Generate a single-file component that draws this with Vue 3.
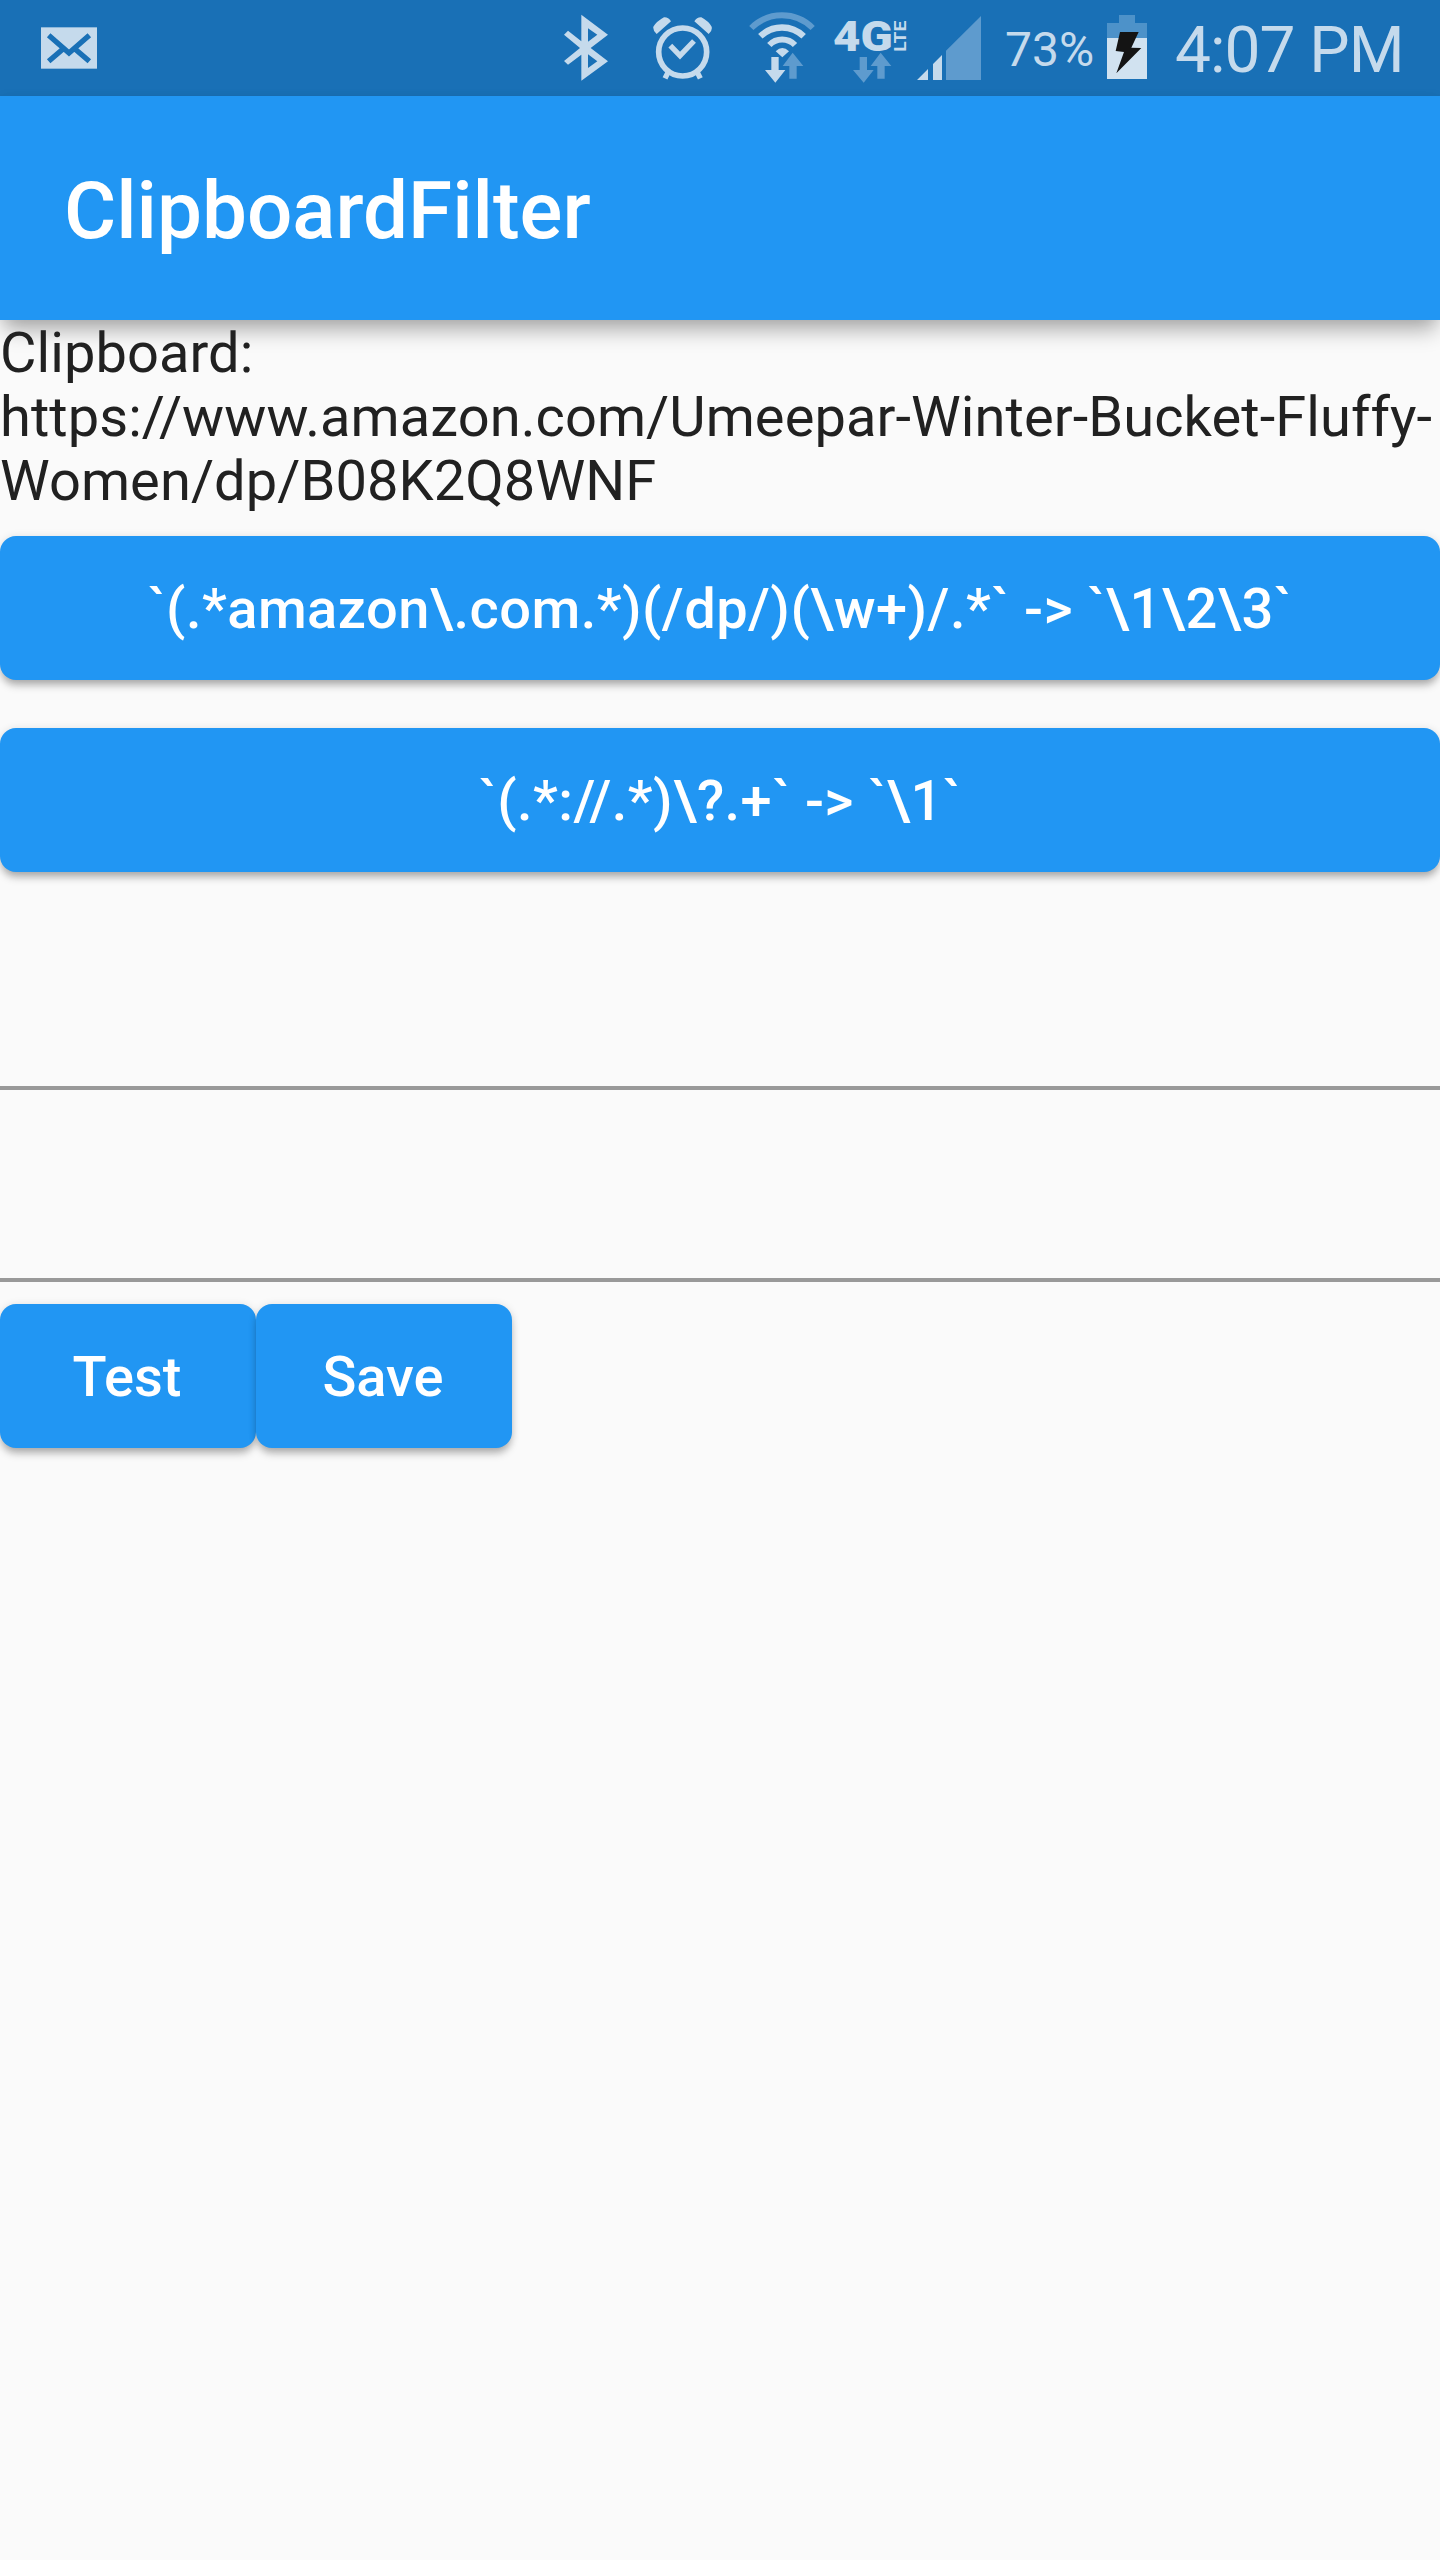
<script setup>
const clipboard = 'https://www.amazon.com/Umeepar-Winter-Bucket-Fluffy-Women/dp/B08K2Q8WNF'
const filters = [
  '`(.*amazon\\.com.*)(/dp/)(\\w+)/.*` -> `\\1\\2\\3`',
  '`(.*://.*)\\?.+` -> `\\1`',
]
</script>

<template>
  <div class="screen">
    <div class="status-bar">
      <svg class="mail" viewBox="123 0 168 288" width="56" height="96">
        <rect class="lit" x="123" y="82" width="168" height="124" />
        <path class="cut" d="M146 106L207 159L268 106M146 184L189 147M268 184L225 147" />
      </svg>

      <svg class="bluetooth" viewBox="72 0 132 288" width="44" height="96">
        <path class="lit" fill-rule="evenodd" d="M84 92L124 124V44L204 104L152 144L204 184L124 242V164L84 194L72 183L120 144L72 104ZM144 85V125L172 104ZM144 163V204L172 184Z" />
      </svg>

      <svg class="alarm" viewBox="339 0 177 288" width="59" height="96">
        <circle class="line" cx="428" cy="156" r="72" stroke-width="17" />
        <path class="line" stroke-width="16" d="M391 137L420 167L462 123M384 217L375 235M472 217L481 235" />
        <path class="lit" d="M350 102L393 64Q385 51 372 52Q350 64 340 80Q338 92 350 102ZM506 102L463 64Q471 51 484 52Q506 64 515 80Q518 92 506 102Z" />
      </svg>

      <svg class="wifi" viewBox="57 0 198 288" width="66" height="96">
        <path class="line faint" stroke-width="18" d="M64 84A130 130 0 0 1 248 84" />
        <path class="line" stroke-width="19" d="M91 109A93 93 0 0 1 221 109" />
        <path class="line" stroke-width="18" d="M118 135A53 53 0 0 1 195 135" />
        <path class="lit" d="M137 154Q157 134 177 154L157 172Z" />
        <path class="dim" d="M188 158L220 198H200V236H178V198H158Z" />
        <path class="lit" d="M124 171H146V210H166L136 248L105 210H124Z" />
      </svg>

      <svg class="network" viewBox="312 0 216 288" width="72" height="96">
        <text class="gen" x="309" y="152" textLength="179" lengthAdjust="spacingAndGlyphs">4G</text>
        <text class="lte" transform="translate(527 155) rotate(-90)" textLength="93" lengthAdjust="spacingAndGlyphs">LTE</text>
        <path class="dim" d="M452 158L484 198H464V236H442V198H422ZM389 171H411V210H431L401 248L369 210H389Z" />
      </svg>

      <svg class="signal" viewBox="558 0 195 288" width="65" height="96">
        <path class="lit" d="M561 240L594 207V240ZM609 240V192L636 165V240Z" />
        <path class="dim" d="M648 240V152L753 48V240Z" />
      </svg>

      <span class="percent">73%</span>

      <svg class="battery" viewBox="351 0 120 288" width="40" height="96">
        <path fill="#4d92c9" d="M387 45H435V69H471V114H351V69H387Z" />
        <rect fill="#d1e2f0" x="351" y="114" width="120" height="123" />
        <path fill="#141414" d="M390 96H446L424 143L454 144L379 220L402 156L377 153Z" />
      </svg>

      <span class="clock">4:07 PM</span>
    </div>

    <header class="app-bar">
      <h1>ClipboardFilter</h1>
    </header>

    <main>
      <p class="clip">Clipboard:<br />{{ clipboard }}</p>
      <button v-for="f in filters" :key="f" class="btn wide">{{ f }}</button>
      <input class="field" aria-label="Pattern" />
      <input class="field" aria-label="Replacement" />
      <div class="actions">
        <button class="btn">Test</button>
        <button class="btn">Save</button>
      </div>
    </main>
  </div>
</template>

<style>
body {
  margin: 0;
  background: #fafafa;
}
</style>

<style scoped>
.screen {
  width: 1440px;
  height: 2560px;
  overflow: hidden;
  background: #fafafa;
  font-family: Roboto, sans-serif;
  color: #212121;
}

.status-bar {
  display: flex;
  height: 96px;
  background: #1970b6;
  color: #c5daec;
}
.status-bar svg {
  flex: none;
}
.lit {
  fill: #c5daec;
}
.dim {
  fill: #5e9bce;
}
.line {
  fill: none;
  stroke: #c5daec;
}
.line.faint {
  stroke: #5e9bce;
}
.cut {
  fill: none;
  stroke: #1970b6;
  stroke-width: 16;
}
.mail {
  margin-left: 41px;
}
.bluetooth {
  margin-left: 467px;
}
.alarm {
  margin-left: 45px;
}
.wifi {
  margin-left: 37px;
}
.network {
  margin-left: 19px;
  overflow: visible;
}
.signal {
  margin-left: 10px;
}
.gen {
  font: 900 125px Roboto, sans-serif;
  fill: #c5daec;
}
.lte {
  font: 700 50px Roboto, sans-serif;
  fill: #c5daec;
}
.percent {
  width: 89px;
  margin-left: 24px;
  font-size: 48px;
  line-height: 100px;
  white-space: nowrap;
}
.battery {
  margin-left: 13px;
}
.clock {
  margin-left: 28px;
  font-size: 64px;
  font-weight: 370;
  line-height: 102px;
  letter-spacing: -1px;
  white-space: nowrap;
}

.app-bar {
  display: flex;
  align-items: center;
  box-sizing: border-box;
  height: 224px;
  padding: 6px 0 0 64px;
  background: #2196f3;
  box-shadow: 0 14px 20px -4px rgba(0, 0, 0, 0.31), 0 2px 12px rgba(0, 0, 0, 0.06);
}
h1 {
  margin: 0;
  color: #fff;
  font-size: 80px;
  font-weight: 500;
  line-height: 94px;
}

main {
  display: flex;
  flex-direction: column;
}
.clip {
  margin: 0;
  padding: 1px 0 23px;
  font-size: 56px;
  line-height: 64px;
  letter-spacing: 0.075px;
}
.btn {
  width: 256px;
  height: 144px;
  padding: 1px 2px 0 0;
  border: 0;
  border-radius: 16px;
  background: #2196f3;
  color: #fff;
  font: 500 56px/64px Roboto, sans-serif;
  box-shadow: 0 7px 9px -2px rgba(0, 0, 0, 0.28), 0 1px 8px rgba(0, 0, 0, 0.12);
}
.wide {
  width: 100%;
  margin-bottom: 48px;
  padding-right: 0;
  letter-spacing: 0.45px;
}
.field {
  box-sizing: border-box;
  height: 192px;
  padding: 0;
  border: 0;
  border-bottom: 4px solid #999;
  background: none;
  font: 64px Roboto, sans-serif;
}
.wide + .field {
  height: 170px;
}
.actions {
  display: flex;
  margin-top: 22px;
}
</style>
